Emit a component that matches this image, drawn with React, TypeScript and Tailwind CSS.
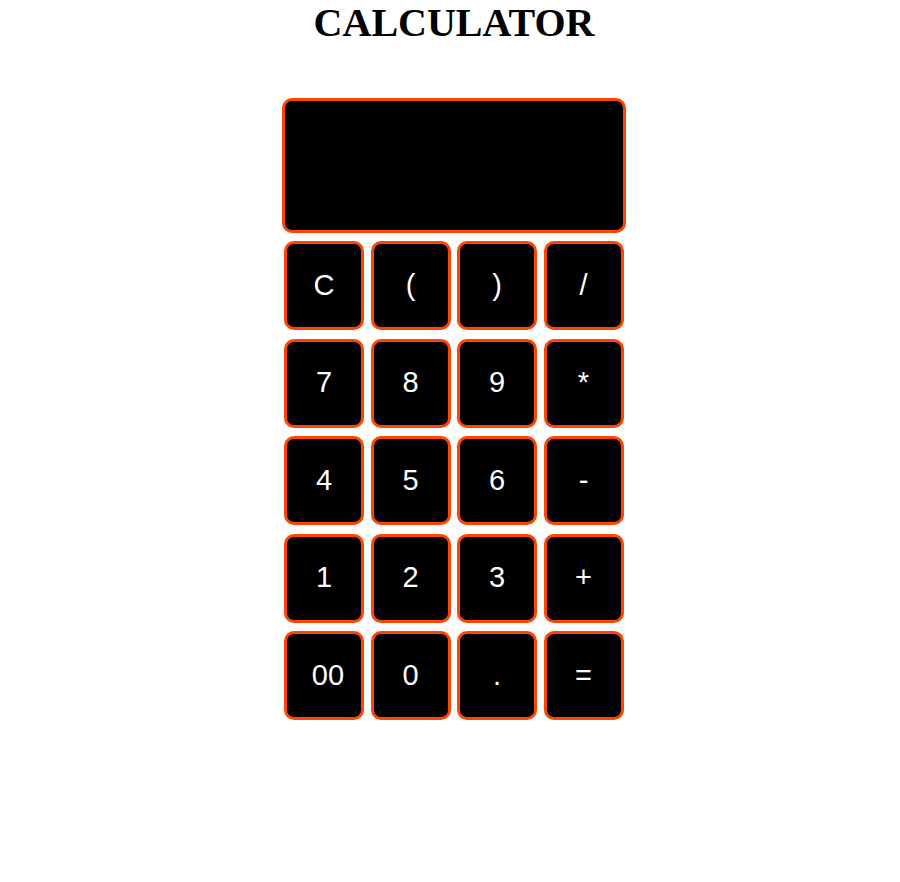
import React from "react";

const keys = [
  "C", "(", ")", "/",
  "7", "8", "9", "*",
  "4", "5", "6", "-",
  "1", "2", "3", "+",
  "00", "0", ".", "=",
];

export default function App() {
  return (
    <div className="min-h-[882px] bg-white pl-[8px]">
      <h1
        className="m-0 text-center text-[40px] font-bold leading-[46px] text-black"
        style={{ fontFamily: '"Liberation Serif", "Times New Roman", serif' }}
      >
        CALCULATOR
      </h1>
      <div className="mx-auto mt-[52px] flex w-[344px] flex-col">
        <div className="h-[135px] w-[344px] rounded-[10px] border-[3px] border-[#ff4500] bg-black" />
        <div
          className="mt-[8px] grid grid-cols-[repeat(4,80px)] gap-x-[6.5px] gap-y-[8.5px] px-[2px]"
          style={{ fontFamily: '"Liberation Sans", Arial, sans-serif' }}
        >
          {keys.map((k) => (
            <button
              key={k}
              className={`flex h-[89px] w-[80px] items-center justify-center rounded-[10px] border-[3px] border-[#ff4500] bg-black text-[29px] text-white ${
                k === "00" ? "pl-[8px]" : ""
              }`}
            >
              {k}
            </button>
          ))}
        </div>
      </div>
    </div>
  );
}
